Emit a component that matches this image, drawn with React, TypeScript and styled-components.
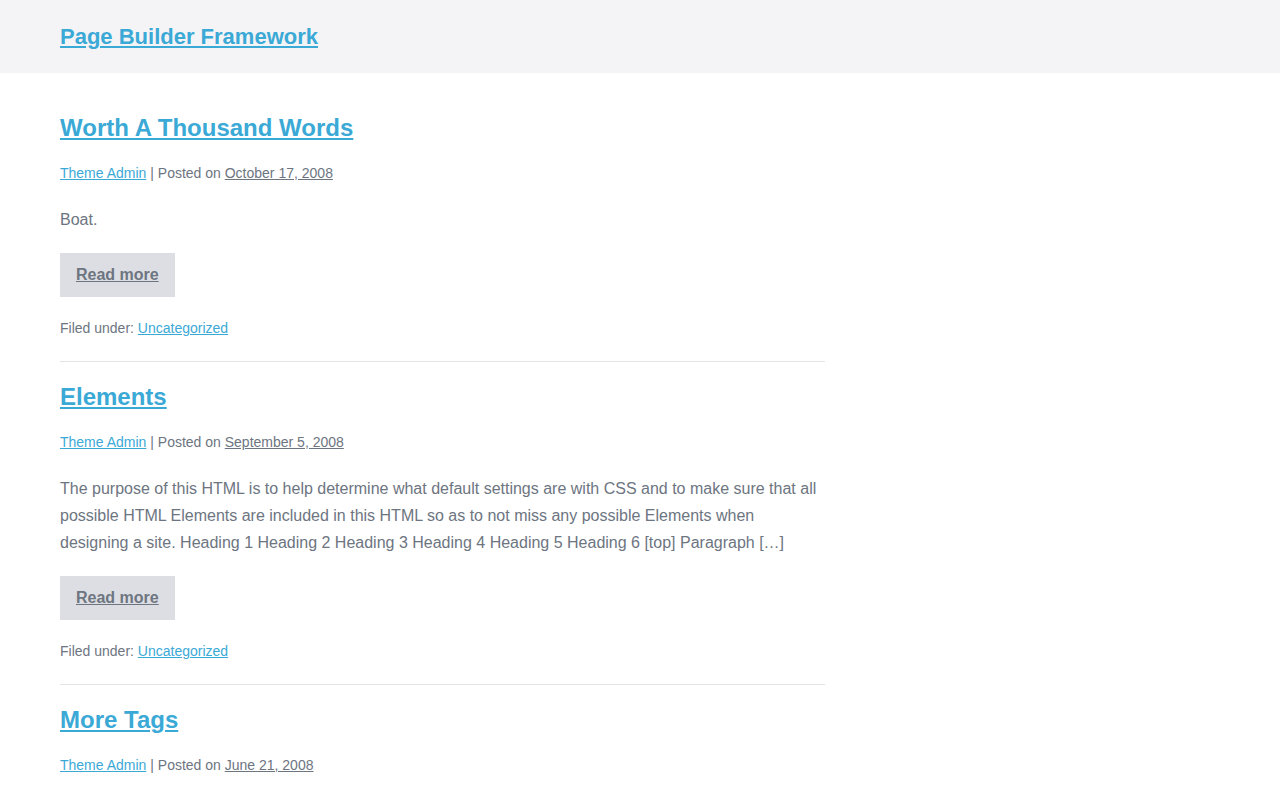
import React from "react";
import styled, { createGlobalStyle } from "styled-components";

const GlobalStyle = createGlobalStyle`
  html, body { margin: 0; padding: 0; background: #ffffff; }
  body {
    font-family: "Liberation Sans", Arial, Helvetica, sans-serif;
    color: #6d7581;
    -webkit-font-smoothing: antialiased;
  }
`;

const LINK = "#3ba9d6";

const Header = styled.header`
  background: #f4f4f6;
  height: 73px;
  box-sizing: border-box;
  display: flex;
  align-items: center;
  padding: 2px 60px 0;
`;

const SiteTitle = styled.a`
  font-size: 22px;
  font-weight: 700;
  color: ${LINK};
  text-decoration: underline;
  text-underline-offset: 2px;
  line-height: 1.2;
`;

const Main = styled.main`
  padding: 40px 60px 0;
  display: grid;
  grid-template-columns: 765px 1fr;
`;

const Feed = styled.div`
  display: flex;
  flex-direction: column;
`;

const Article = styled.article<{ $last?: boolean }>`
  display: flex;
  flex-direction: column;
  align-items: flex-start;
  padding-bottom: ${(p) => (p.$last ? "0" : "22px")};
  margin-bottom: ${(p) => (p.$last ? "0" : "20px")};
  border-bottom: ${(p) => (p.$last ? "none" : "1px solid #e3e4e8")};
`;

const Title = styled.h2`
  margin: 0 0 18.5px;
  font-size: 24px;
  font-weight: 700;
  line-height: 29px;
  a {
    color: ${LINK};
    text-decoration: underline;
    text-underline-offset: 2px;
  }
`;

const Meta = styled.p`
  margin: 0 0 21.5px;
  font-size: 14px;
  line-height: 24px;
`;

const AuthorLink = styled.a`
  color: ${LINK};
  text-decoration: underline;
`;

const DateLink = styled.a`
  color: #6d7581;
  text-decoration: underline;
`;

const Excerpt = styled.p`
  margin: 0 0 20px;
  font-size: 16px;
  line-height: 27px;
`;

const ReadMore = styled.a`
  display: inline-flex;
  align-items: center;
  height: 44px;
  margin-bottom: 20px;
  padding: 0 16px;
  box-sizing: border-box;
  background: #dddee3;
  color: #6d7581;
  font-size: 16px;
  font-weight: 700;
  text-decoration: underline;
`;

const Filed = styled.p`
  margin: 0;
  font-size: 14px;
  line-height: 22px;
`;

type Post = { title: string; date: string; excerpt?: string };

const posts: Post[] = [
  { title: "Worth A Thousand Words", date: "October 17, 2008", excerpt: "Boat." },
  {
    title: "Elements",
    date: "September 5, 2008",
    excerpt:
      "The purpose of this HTML is to help determine what default settings are with CSS and to make sure that all possible HTML Elements are included in this HTML so as to not miss any possible Elements when designing a site. Heading 1 Heading 2 Heading 3 Heading 4 Heading 5 Heading 6 [top] Paragraph […]",
  },
  { title: "More Tags", date: "June 21, 2008" },
];

export default function App() {
  return (
    <>
      <GlobalStyle />
      <Header>
        <SiteTitle href="#">Page Builder Framework</SiteTitle>
      </Header>
      <Main>
        <Feed>
          {posts.map((p, i) => {
            const last = i === posts.length - 1;
            return (
              <Article key={p.title} $last={last}>
                <Title>
                  <a href="#">{p.title}</a>
                </Title>
                <Meta>
                  <AuthorLink href="#">Theme Admin</AuthorLink> | Posted on{" "}
                  <DateLink href="#">{p.date}</DateLink>
                </Meta>
                {p.excerpt && (
                  <>
                    <Excerpt>{p.excerpt}</Excerpt>
                    <ReadMore href="#">Read more</ReadMore>
                    <Filed>
                      Filed under: <AuthorLink href="#">Uncategorized</AuthorLink>
                    </Filed>
                  </>
                )}
              </Article>
            );
          })}
        </Feed>
        <aside />
      </Main>
    </>
  );
}
